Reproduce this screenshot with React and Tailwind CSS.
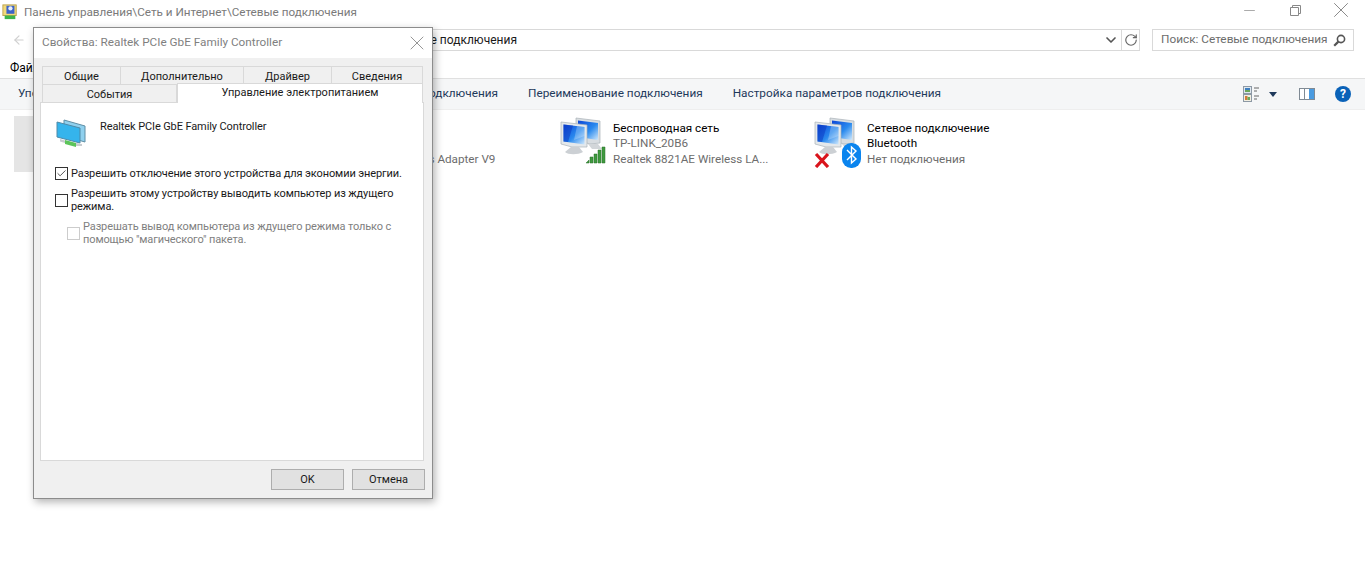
import React from "react";
import { ArrowLeft, ChevronDown, RotateCw, X, Minus, Check } from "lucide-react";

function Monitors({ children }) {
  return (
    <svg width="48" height="52" viewBox="0 0 48 52" className="shrink-0">
      <defs>
        <linearGradient id="scr" x1="0" y1="0" x2="1" y2="1">
          <stop offset="0" stopColor="#0b45d8" />
          <stop offset="0.55" stopColor="#2a8aee" />
          <stop offset="1" stopColor="#cfe8fc" />
        </linearGradient>
      </defs>
      {/* back monitor */}
      <path d="M16 2 L40 5 L40 27 L30 28 L16 24 Z" fill="#d8dde1" stroke="#a9b2b8" strokeWidth="0.7" />
      <path d="M18 4.5 L38 7 L38 24 L18 21 Z" fill="url(#scr)" />
      <path d="M28 28 L38 28 L42 33 L32 33 Z" fill="#d2d6d9" />
      {/* front monitor */}
      <path d="M1 6 L27 9 L27 31 L12 31 L1 28 Z" fill="#e4e8eb" stroke="#a9b2b8" strokeWidth="0.7" />
      <path d="M3.5 8.5 L24.5 11 L24.5 28.5 L3.5 25.5 Z" fill="url(#scr)" />
      <path d="M3.5 8.5 L13 9.6 L8 26 L3.5 25.5 Z" fill="#0a36c0" opacity="0.5" />
      <path d="M17 10.2 L24.5 11 L24.5 20 L14 24 Z" fill="#ffffff" opacity="0.25" />
      <path d="M11 31 L19 31 L23 36 C 18 39 8 39 5 36 Z" fill="#ccd0d4" />
      {children}
    </svg>
  );
}

function SmallAdapter() {
  return (
    <svg width="30" height="28" viewBox="0 0 30 28" className="shrink-0">
      <path d="M8 1 L29 7 L29 23 L8 17 Z" fill="#8fd0ee" stroke="#5f8ea5" strokeWidth="1" />
      <path d="M1 3 L24 9 L24 24 L1 18 Z" fill="#35b4ec" stroke="#4f8aa8" strokeWidth="1" />
      <path d="M9 21 L20 24 L20 28 L9 25 Z" fill="#5cc45a" />
      <path d="M4 20 L9 21.5 L9 24 L4 22.5 Z M20 24 L26 25 L26 27 L20 27 Z" fill="#c8ccd0" />
    </svg>
  );
}

function Item({ title, lines, icon, shifted }) {
  return (
    <div className="w-[254px] h-[56px] flex">
      <div className="w-[53px] shrink-0">{icon}</div>
      <div className={`w-[140px] text-[11.7px] leading-[15.5px] pt-[4.6px] text-[#6d6d6d] ${shifted ? "pl-[3px]" : ""}`}>
        <div className="text-black">{title}</div>
        {lines.map((l) => (
          <div key={l} className="whitespace-nowrap">{l}</div>
        ))}
      </div>
    </div>
  );
}

function Tab({ w, children }) {
  return (
    <div
      className={`${w} h-[18px] pt-[1px] flex items-center justify-center bg-[#f0f0f0] border border-[#d9d9d9] border-b-0 -ml-px first:ml-0 text-[11px] leading-[13px] text-[#1a1a1a]`}
    >
      {children}
    </div>
  );
}

function Box({ checked, disabled }) {
  return (
    <div
      className={`w-[13px] h-[13px] shrink-0 bg-white border flex items-center justify-center ${
        disabled ? "border-[#cccccc]" : "border-[#333333]"
      }`}
    >
      {checked && <Check size={13} strokeWidth={1.8} className="text-[#333333]" />}
    </div>
  );
}

function Dialog() {
  return (
    <div className="absolute left-[33px] top-[27px] w-[400px] h-[472px] bg-[#f0f0f0] border border-[#8c8c8c] shadow-[2px_3px_8px_rgba(0,0,0,0.3)] flex flex-col">
      <div className="h-[30px] bg-white flex items-center justify-between pl-[8px] pr-[3px] shrink-0">
        <span className="text-[11.75px] text-[#7f7f7f]">Свойства: Realtek PCIe GbE Family Controller</span>
        <X size={24} strokeWidth={0.9} className="text-[#8a8a8a]" />
      </div>
      <div className="pl-[8px] pt-[8px] w-[390px]">
        <div className="flex">
          <Tab w="w-[79px]">Общие</Tab>
          <Tab w="w-[124px]">Дополнительно</Tab>
          <Tab w="w-[89px]">Драйвер</Tab>
          <Tab w="w-[92px]">Сведения</Tab>
        </div>
        <div className="flex h-[18px]">
          <Tab w="w-[135px]">События</Tab>
          <div className="relative z-10 w-[246px] h-[20px] -mt-[1px] pt-[2px] bg-white border border-[#d9d9d9] border-b-0 text-[11px] text-[#1a1a1a] text-center leading-[13px]">
            Управление электропитанием
          </div>
        </div>
        <div className="-ml-[2px] w-[384px] h-[359px] bg-white border border-[#d9d9d9] text-[11px] tracking-[-0.11px] leading-[13px] text-[#1a1a1a]">
          <div className="flex pl-[15px] pt-[16px]">
            <SmallAdapter />
            <span className="ml-[14px] mt-[1px]">Realtek PCIe GbE Family Controller</span>
          </div>
          <div className="flex items-center pl-[14px] mt-[20px] gap-[3px]">
            <Box checked />
            <span>Разрешить отключение этого устройства для экономии энергии.</span>
          </div>
          <div className="flex items-center pl-[14px] mt-[7px] gap-[3px]">
            <Box />
            <span className="w-[335px]">Разрешить этому устройству выводить компьютер из ждущего режима.</span>
          </div>
          <div className="flex items-center pl-[26px] mt-[7px] gap-[3px] text-[#808080]">
            <Box disabled />
            <span className="w-[320px]">Разрешать вывод компьютера из ждущего режима только с помощью "магического" пакета.</span>
          </div>
        </div>
      </div>
      <div className="flex justify-end gap-[8px] pr-[7px] mt-[8px]">
        <button className="w-[73px] h-[21px] pt-[1px] bg-[#e1e1e1] border border-[#adadad] text-[11px] text-[#1a1a1a]">OK</button>
        <button className="w-[73px] h-[21px] pt-[1px] bg-[#e1e1e1] border border-[#adadad] text-[11px] text-[#1a1a1a]">Отмена</button>
      </div>
    </div>
  );
}

export default function App() {
  return (
    <div className="relative h-screen overflow-hidden bg-white font-['Roboto',sans-serif]">
      {/* title bar */}
      <div className="h-[26px] flex items-center justify-between pl-[2px] pr-[1px]">
        <div className="flex items-center gap-[6px]">
          <svg width="16" height="16" viewBox="0 0 16 18" className="-mt-[2px]">
            <rect x="0" y="1" width="15" height="12" fill="#f0d97a" stroke="#b9a04a" />
            <rect x="4" y="2" width="9" height="9" fill="#3c63c8" />
            <circle cx="8.5" cy="5" r="2.4" fill="#e8eef8" />
            <rect x="2" y="13" width="12" height="4" fill="#3bb54a" />
          </svg>
          <span className="text-[11.7px] text-[#7a7a7a]">Панель управления\Сеть и Интернет\Сетевые подключения</span>
        </div>
        <div className="flex items-center -mt-[6px]">
          <div className="w-[46px] flex justify-center"><Minus size={17} strokeWidth={1} className="text-[#888888]" /></div>
          <div className="w-[46px] flex justify-center">
            <svg width="11" height="11" viewBox="0 0 11 11" fill="none" stroke="#888888">
              <path d="M0.5 2.5 H8.5 V10.5 H0.5 Z M2.5 2.5 V0.5 H10.5 V8.5 H8.5" />
            </svg>
          </div>
          <div className="w-[46px] flex justify-center"><X size={26} strokeWidth={0.9} className="text-[#888888]" /></div>
        </div>
      </div>

      {/* address row */}
      <div className="h-[28px] flex items-center pl-[12px] pr-[11px]">
        <ArrowLeft size={14} strokeWidth={2} className="text-[#d0d0d0]" />
        <div className="ml-[34px] w-[1080px] h-[22px] border border-[#d9d9d9] flex items-center">
          <div className="w-[456px] text-right whitespace-nowrap text-[12px] text-[#1a1a1a] shrink-0">Сетевые подключения</div>
          <div className="flex-1" />
          <ChevronDown size={16} strokeWidth={2.5} className="text-[#555555] mr-[2px]" />
          <div className="w-[18px] h-full border-l border-[#d9d9d9] flex items-center justify-center">
            <RotateCw size={14} strokeWidth={2} className="text-[#666666]" />
          </div>
        </div>
        <div className="ml-auto w-[202px] h-[22px] border border-[#d9d9d9] flex items-center justify-between pl-[8px] pr-[7px]">
          <span className="text-[11.8px] text-[#6d6d6d] whitespace-nowrap">Поиск: Сетевые подключения</span>
          <svg width="13" height="13" viewBox="0 0 13 13" fill="none" stroke="#555555">
            <circle cx="8" cy="5" r="3.6" strokeWidth="1.6" />
            <path d="M5.4 7.6 L1.2 11.8" strokeWidth="2.2" />
          </svg>
        </div>
      </div>

      {/* menu row */}
      <div className="h-[24px] flex items-center pl-[10px] pt-[4px] gap-[12px] text-[12px] text-black">
        <span>Файл</span>
        <span>Правка</span>
        <span>Вид</span>
      </div>

      {/* toolbar */}
      <div className="h-[32px] flex items-center justify-between bg-[#f5f6f7] border-t border-[#e0e0e0] border-b-[#eeeeee] border-b pl-[18px] pr-[14px] text-[11.8px] text-[#1e395b]">
        <div className="flex items-center">
          <div className="w-[480px] flex justify-between whitespace-nowrap">
            <span>Упорядочить</span>
            <span>Диагностика подключения</span>
          </div>
          <span className="ml-[30px] whitespace-nowrap">Переименование подключения</span>
          <span className="ml-[30px] whitespace-nowrap">Настройка параметров подключения</span>
        </div>
        <div className="flex items-center">
          <svg width="16" height="16" viewBox="0 0 16 16">
            <rect x="0.5" y="0.5" width="8" height="7" fill="#dfe7ee" stroke="#8d99a5" />
            <rect x="2" y="2" width="5" height="2" fill="#3f7fbf" />
            <rect x="2" y="4" width="5" height="2" fill="#6aa85a" />
            <rect x="0.5" y="8.5" width="8" height="7" fill="#f2eee0" stroke="#8d99a5" />
            <rect x="2" y="10" width="2.5" height="4" fill="#d27b3a" />
            <rect x="4.5" y="11" width="2.5" height="3" fill="#6aa85a" />
            <path d="M11 2 H16 M11 5 H14 M11 10 H16 M11 13 H14" stroke="#666666" />
          </svg>
          <svg width="8" height="5" viewBox="0 0 8 5" className="ml-[10px]">
            <path d="M0 0 H8 L4 5 Z" fill="#1e395b" />
          </svg>
          <svg width="16" height="12" viewBox="0 0 16 12" className="ml-[22px]">
            <rect x="0.5" y="0.5" width="15" height="11" fill="#ffffff" stroke="#7f8a94" />
            <rect x="10" y="1" width="5" height="10" fill="#4a9be0" />
            <path d="M5.5 1 V11" stroke="#7f8a94" />
          </svg>
          <div className="ml-[20px] w-[16px] h-[16px] rounded-full bg-[#0a62b8] text-white text-[12px] font-bold flex items-center justify-center">?</div>
        </div>
      </div>

      {/* connections */}
      <div className="flex pl-[14px] pt-[6px]">
        <div className="w-[292px] h-[56px] bg-[#e5e5e5]" />
        <Item
          shifted
          title="Ethernet"
          lines={["Сеть", "TAP-Windows Adapter V9"]}
          icon={<Monitors />}
        />
        <Item
          title="Беспроводная сеть"
          lines={["TP-LINK_20B6", "Realtek 8821AE Wireless LA..."]}
          icon={
            <Monitors>
              <path d="M26 47 L29 47 L29 44 L26 47 Z M30 47 H33 V41 H30 Z M34 47 H37 V38 H34 Z M38 47 H41 V34 H38 Z M42 47 H45 V31 H42 Z" fill="#3f9a3f" stroke="#2a6f2a" strokeWidth="0.5" />
            </Monitors>
          }
        />
        <Item
          title="Сетевое подключение Bluetooth"
          lines={["Нет подключения"]}
          icon={
            <Monitors>
              <path d="M2 38 L14 51 M14 38 L2 51" stroke="#d9141c" strokeWidth="3.2" />
              <rect x="28" y="27" width="19" height="25" rx="9" fill="#0a84ee" />
              <path d="M33 34 L42 43 L37.5 47 V31 L42 35 L33 44" fill="none" stroke="#ffffff" strokeWidth="1.4" />
            </Monitors>
          }
        />
      </div>

      <Dialog />
    </div>
  );
}
